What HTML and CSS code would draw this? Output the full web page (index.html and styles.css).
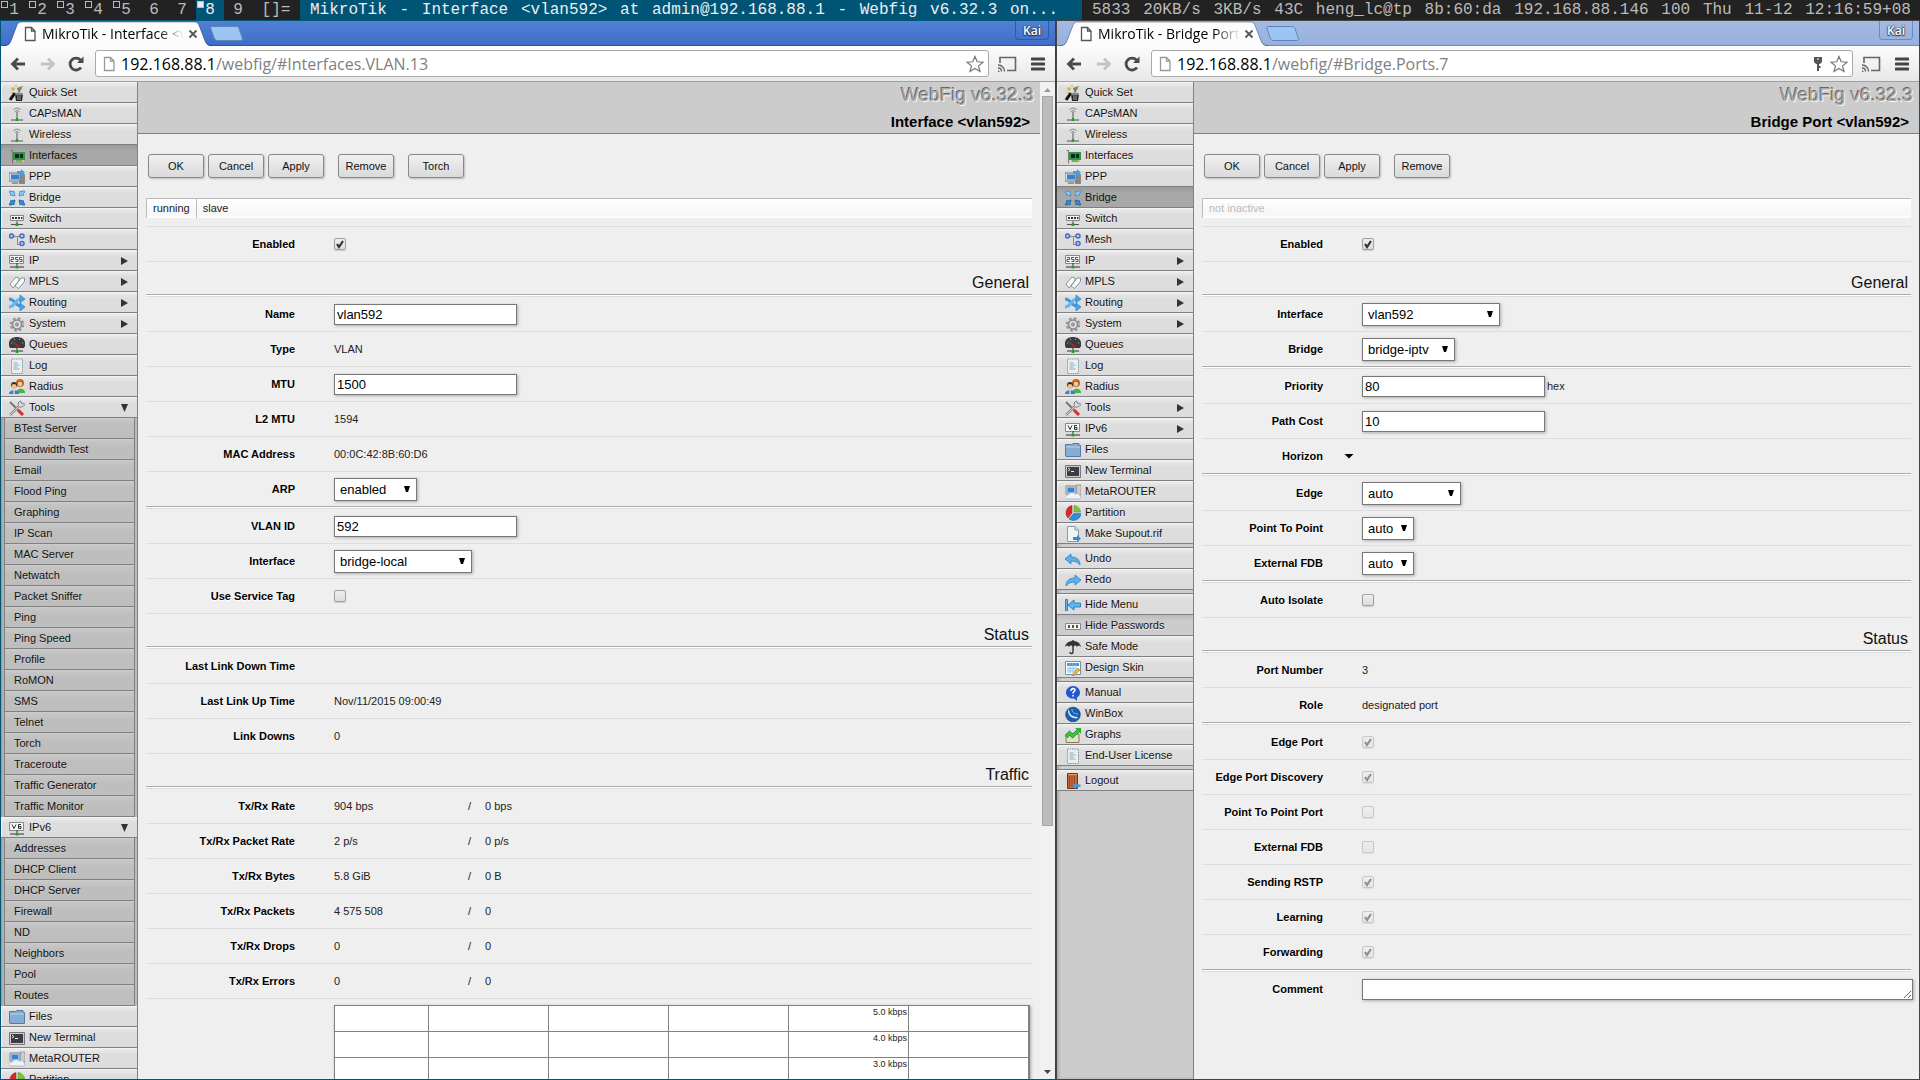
FILE: index.html
```html
<!DOCTYPE html>
<html lang="en">
<head>
<meta charset="utf-8">
<title>MikroTik - Interface &lt;vlan592&gt;</title>
<link rel="stylesheet" href="styles.css">
</head>
<body>
<svg class="sprite" aria-hidden="true">
  <symbol id="i-quick" viewBox="0 0 16 16"><path d="M1 15l5-7" stroke="#111" stroke-width="3"/><path d="M8 3l6-2-4 7z" fill="#666"/><path d="M6 9h8l-1 7H7z" fill="#222"/><ellipse cx="10" cy="9" rx="4" ry="1.5" fill="#888"/><path d="M9 11v4M11 11v4" stroke="#aaa"/><path d="M4 2v4M2 4h4M7 0v2M9 5l4-3M3 7v2" stroke="#d9a514"/></symbol>
  <symbol id="i-wifi" viewBox="0 0 16 16"><path d="M4.500 4C5.500 1.500 10.500 1.500 11.500 4M6 6c.5-2 3.500-2 4 0" fill="none" stroke="#888"/><path d="M8 5.500V13" stroke="#555"/><path d="M2 14h12" stroke="#555"/><path d="M6.500 15l.5-3h2l.5 3z" fill="#19a528"/></symbol>
  <symbol id="i-nic" viewBox="0 0 16 16"><path d="M1.500 2.500h2v13" fill="none" stroke="#777"/><path d="M4 4h12v8H4z" fill="#2f9838"/><path d="M6 12h9v2H6z" fill="#b9d84a"/><path d="M6 6h4v4H6zM11 6h3v4h-3z" fill="#123"/><path d="M8 12v2M10 12v2M12 12v2" stroke="#286"/></symbol>
  <symbol id="i-ppp" viewBox="0 0 16 16"><path d="M10 5h6v10h-6z" fill="#888"/><path d="M0 4h11v8H0z" fill="#ddd" stroke="#777"/><path d="M2 5.500h8v5H2z" fill="#2f86d8"/><path d="M3 13h6v2H3z" fill="#999"/><path d="M8 5V2h4V0l4 3.500L12 7V5z" fill="#39a4ee"/><path d="M12 12h3v1h-3z" fill="#2b2"/></symbol>
  <symbol id="i-bridge" viewBox="0 0 16 16"><path d="M0 1h3l1 1 1-1 1 5-5-1 1-1-2-2zM16 1h-3l-1 1-1-1-1 5 5-1-1-1 2-2z" fill="#7fcbf5" stroke="#3a83b8" stroke-width=".7"/><path d="M0 15h3l1-1 1 1 1-5-5 1 1 1-2 2zM16 15h-3l-1-1-1 1-1-5 5 1-1 1 2 2z" fill="#288fe0" stroke="#145b9c" stroke-width=".7"/></symbol>
  <symbol id="i-switch" viewBox="0 0 16 16"><path d="M1.500 4.500h13v5h-13z" fill="#f4f4f4" stroke="#888"/><path d="M3 7h2M6 7h2M9 7h2M12 7h1.500" stroke="#333" stroke-width="2"/><path d="M8 10v3M2 13.500h12" stroke="#555"/><path d="M6.500 15l.5-3h2l.5 3z" fill="#19a528"/></symbol>
  <symbol id="i-mesh" viewBox="0 0 16 16"><path d="M4 4.500h7M8.500 4.500v8H11" fill="none" stroke="#888"/><g fill="#b9cdf8" stroke="#4968c8" stroke-width="1.500"><circle cx="2.500" cy="4" r="2"/><circle cx="13" cy="4" r="2"/><circle cx="13" cy="11.500" r="2"/></g></symbol>
  <symbol id="i-ip" viewBox="0 0 16 16"><path d="M.5 2.500h14v8H.5z" fill="#f6f6f6" stroke="#888"/><path d="M2 4.500h2.500v2H2v2h2.500M9 4.500H6.500v2H9v2H6.500M13 4.500h-2.500v2H13v2h-2.500" fill="none" stroke="#555"/><path d="M8 10v3M1 14h14" stroke="#333"/><path d="M6.500 15.500L7 13h2l.5 2.500z" fill="#19a528"/></symbol>
  <symbol id="i-v6" viewBox="0 0 16 16"><path d="M.5 2.500h14v8H.5z" fill="#f6f6f6" stroke="#888"/><path d="M3 4.500l2 4 2-4M12 4.500H9.500v4H12v-2H9.500" fill="none" stroke="#333"/><path d="M8 10v3M1 14h14" stroke="#333"/><path d="M6.500 15.500L7 13h2l.5 2.500z" fill="#19a528"/></symbol>
  <symbol id="i-mpls" viewBox="0 0 16 16"><path d="M1 10l6-7 3 1v3l-6 7zM6 12l6-8h3.500v3.500l-6 7z" fill="#f3faf9" stroke="#7a8c8c" stroke-width=".9"/></symbol>
  <symbol id="i-route" viewBox="0 0 16 16"><path d="M0 4c6 0 6 7 12 7" fill="none" stroke="#3d99dc" stroke-width="3"/><path d="M0 12c6 0 6-8 12-8" fill="none" stroke="#64b5ee" stroke-width="3"/><path d="M11 0l5 4-5 4zM11 8l5 4-5 4z" fill="#4aa5e6" stroke="#2672ae" stroke-width=".6"/></symbol>
  <symbol id="i-gear" viewBox="0 0 16 16"><circle cx="8" cy="8.500" r="6" fill="none" stroke="#999" stroke-width="2.500" stroke-dasharray="2.700 2"/><circle cx="8" cy="8.500" r="4.500" fill="#ddd" stroke="#8a8a8a" stroke-width="1.500"/><circle cx="8" cy="8.500" r="1.500" fill="#aaa" stroke="#777" stroke-width=".8"/></symbol>
  <symbol id="i-queue" viewBox="0 0 16 16"><path d="M0 6C0 2 4 0 8 0s8 2 8 6v3l-1 2H1L0 9z" fill="#3c3c3c"/><path d="M3 4l7 6" stroke="#d33"/><path d="M2 6h1M5 2.500h1M10 2.500h1M13 6h1" stroke="#aaa"/><path d="M8 11v3M2 14h12" stroke="#333"/><path d="M6.500 16L7 13h2l.5 3z" fill="#19a528"/></symbol>
  <symbol id="i-log" viewBox="0 0 16 16"><path d="M2.500 1h11v14.500h-11z" fill="#e6f0f2" stroke="#86969c" stroke-dasharray="1.500 .8"/><path d="M4.500 5h4M4.500 7h6M4.500 9h4M4.500 11h6" stroke="#9ab"/></symbol>
  <symbol id="i-radius" viewBox="0 0 16 16"><circle cx="11" cy="4" r="4" fill="#c8651c"/><circle cx="11" cy="5" r="2.200" fill="#f5c89b"/><path d="M7 14c0-5 8-6 9-1v1z" fill="#4cae52"/><circle cx="5" cy="6" r="3" fill="#333"/><circle cx="5" cy="7.500" r="2.500" fill="#f0bd8c"/><path d="M0 15c0-5 10-5 10 0z" fill="#3d7ed0"/><path d="M5 11v4" stroke="#fff"/></symbol>
  <symbol id="i-tools" viewBox="0 0 16 16"><path d="M1 2l8 8" stroke="#777" stroke-width="2"/><path d="M9 10l5 5" stroke="#da2e2a" stroke-width="3"/><path d="M1 15L11 5" stroke="#888" stroke-width="2.500"/><path d="M1 15L11 5" stroke="#ddd"/><path d="M15 3a3 3 0 1 1-3-2v2l1 1z" fill="#ddd" stroke="#888"/></symbol>
  <symbol id="i-files" viewBox="0 0 16 16"><path d="M.5 13.500v-11h6l1.500-1h6v2h1.500v11H1z" fill="#86acd3" stroke="#557ba5"/><path d="M1 5h14" stroke="#bcd3ea"/></symbol>
  <symbol id="i-term" viewBox="0 0 16 16"><path d="M.5 2.500h15v12H.5z" fill="#ccc" stroke="#777"/><path d="M2 4h12v9H2z" fill="#3c3d45"/><path d="M3 5l2 1.500L3 8M6 8.500h3" fill="none" stroke="#eee"/></symbol>
  <symbol id="i-meta" viewBox="0 0 16 16"><path d="M11 1h5v10h-5z" fill="#ccc" stroke="#888" stroke-width=".7"/><path d="M1 2h10v8H1z" fill="#ddd" stroke="#888"/><path d="M2.500 3.500h7v5h-7z" fill="#2f86d8"/><path d="M0 13c0-2 2-2 3-2 2-3 6-3 7-1 3-1 5 0 5 2 1 0 1 2 0 3H2c-1 0-2-1-2-2z" fill="#edf3f8" stroke="#9ab" stroke-width=".7"/></symbol>
  <symbol id="i-part" viewBox="0 0 16 16"><path d="M7 8v-7.500A7.500 7.500 0 0 0 3 13z" fill="#db2a2d" stroke="#a11" stroke-width=".5"/><path d="M9 7V.5A7 7 0 0 1 15.500 7z" fill="#7cc53c" stroke="#4a8c1c" stroke-width=".5"/><path d="M8.500 8.500H16A7.500 7.500 0 0 1 4 14z" fill="#2e8ed9" stroke="#1561a5" stroke-width=".5"/></symbol>
  <symbol id="i-supout" viewBox="0 0 16 16"><path d="M2.500.5H10L13.500 4v11.500h-11z" fill="#eef6f8" stroke="#8a9ca2"/><path d="M10 .5V4h3.500" fill="#cde" stroke="#8a9ca2"/><path d="M8 11h4V9l4 3.500-4 3.500v-2H8z" fill="#2e8ed9"/></symbol>
  <symbol id="i-undo" viewBox="0 0 16 16"><path d="M0 8l6-5v3c6 0 9 3 9 8-2-3-5-4-9-4v3z" fill="#59b2ee" stroke="#2c7dba" stroke-width=".8"/></symbol>
  <symbol id="i-redo" viewBox="0 0 16 16"><path d="M16 8l-6-5v3C4 6 1 9 1 14c2-3 5-4 9-4v3z" fill="#59b2ee" stroke="#2c7dba" stroke-width=".8"/></symbol>
  <symbol id="i-hide" viewBox="0 0 16 16"><path d="M.5 2.500h2v11h-2zM3 8l6-5v3h6.500v4H9v3z" fill="#5cb6f0" stroke="#2877b4" stroke-width=".9"/></symbol>
  <symbol id="i-pass" viewBox="0 0 16 16"><path d="M.5 5.500h15v6H.5z" fill="#f4f4f4" stroke="#888"/><path d="M3 7h2v3H3zM7 7h2v3H7zM11 7h2v3h-2z" fill="#555"/></symbol>
  <symbol id="i-safe" viewBox="0 0 16 16"><path d="M0 8c1-8 15-8 16 0-2-2-3-2-4 0-1-2-3-2-4 0-1-2-3-2-4 0-1-2-2-2-4 0z" fill="#333"/><path d="M8 1v12c0 2-3 2-3 0" fill="none" stroke="#333" stroke-width="1.400"/></symbol>
  <symbol id="i-skin" viewBox="0 0 16 16"><path d="M.5 1.500h15v13H.5z" fill="#fff" stroke="#78909c"/><path d="M2 3h12v3H2z" fill="#2e9ee9"/><path d="M2 7h9v6H2z" fill="#cfe8fa"/><path d="M5 3v10M8 3v10M11 3v9M2 8.500h9M2 11h8" stroke="#8cc6ee" stroke-width=".7"/><path d="M8 14l5-6 2 2-5 5-3 1z" fill="#f3b53b" stroke="#b06e1e" stroke-width=".6"/></symbol>
  <symbol id="i-manual" viewBox="0 0 16 16"><path d="M8 1c4 0 7 3 7 6.500 0 2-1 4-3 5V16l-3-2.500C5 14 1 11.500 1 7.500 1 4 4 1 8 1z" fill="#2458cf"/><path d="M6 6c0-3 4-3 4-1 0 1.500-2 1.500-2 3.500M8 10v1.500" fill="none" stroke="#fff" stroke-width="1.600"/></symbol>
  <symbol id="i-winbox" viewBox="0 0 16 16"><circle cx="8" cy="8.500" r="7.300" fill="#1c5fb2" stroke="#12396e" stroke-width=".7"/><path d="M4 3c0 5 3 8 9 8l-1 1.500C6 12.500 3 9 3 5z" fill="#d5ecff"/><path d="M7 3c0 3 2 5 6 5" fill="none" stroke="#7fb8ec"/></symbol>
  <symbol id="i-graphs" viewBox="0 0 16 16"><path d="M1 7h13v8.500H1z" fill="#e5dfc8" stroke="#8a7a5c"/><path d="M1 10l3.500-4 3 3L13 4" fill="none" stroke="#168a22" stroke-width="3.500"/><path d="M1 10l3.500-4 3 3L13 4" fill="none" stroke="#3dcc45" stroke-width="2"/><path d="M10 1h6v6z" fill="#2bb135"/></symbol>
  <symbol id="i-logout" viewBox="0 0 16 16"><path d="M2.500.5h10v15h-10z" fill="#c06a3c" stroke="#74351a"/><path d="M4.500 3v11M7 3v11M9.500 3v11" stroke="#964a24"/><path d="M3 1.500h9" stroke="#e99872"/><path d="M15.500 11.500H11v-2L7 13l4 3v-2h4.500z" fill="#3a9be6"/></symbol>
  <symbol id="c-page" viewBox="0 0 12 16"><path d="M1.500 1.500h6l3.500 3.500v9.500H1.500zM7.500 1.500V5H11" fill="#fff" stroke="currentColor" stroke-width="1.300"/></symbol>
  <symbol id="c-back" viewBox="0 0 16 14"><path d="M15 7H3M8 1.500L2.500 7 8 12.500" fill="none" stroke="currentColor" stroke-width="2.800"/></symbol>
  <symbol id="c-fwd" viewBox="0 0 16 14"><path d="M1 7h12M8 1.500L13.500 7 8 12.500" fill="none" stroke="currentColor" stroke-width="2.800"/></symbol>
  <symbol id="c-reload" viewBox="0 0 16 16"><path d="M13 11.500A6 6 0 1 1 12.500 4" fill="none" stroke="currentColor" stroke-width="2.800"/><path d="M15.500.5V7H9z" fill="currentColor"/></symbol>
  <symbol id="c-star" viewBox="0 0 18 18"><path d="M9 1.500l2.200 5.300 5.800.4-4.500 3.700L14 16.500 9 13.400l-5 3.100 1.500-5.600L1 7.200l5.800-.4z" fill="#fff" stroke="#777" stroke-width="1.200"/></symbol>
  <symbol id="c-cast" viewBox="0 0 20 16"><path d="M3 7V1.500h15.500v13H10" fill="none" stroke="#666" stroke-width="1.600"/><path d="M1 9c4 0 6.500 3 6.500 6.500M1 12c2 0 3.500 1.500 3.500 3.500" fill="none" stroke="#666" stroke-width="1.300"/><path d="M1 14l2 2H1z" fill="#666"/></symbol>
  <symbol id="c-menu" viewBox="0 0 14 14"><path d="M1 2h12M1 7h12M1 12h12" stroke="#444" stroke-width="3" stroke-linecap="round"/></symbol>
  <symbol id="c-key" viewBox="0 0 10 16"><path d="M1 1h8v5L7 8H3L1 6z" fill="#555"/><path d="M5 7v8M6 11h1.500" stroke="#555" stroke-width="2"/><path d="M4 3h2" stroke="#fff"/></symbol>
  <symbol id="c-close" viewBox="0 0 10 10"><path d="M1.500 1.500l7 7M8.500 1.500l-7 7" stroke="#555" stroke-width="1.800"/></symbol>
  <symbol id="c-tab" viewBox="0 0 212 25" preserveAspectRatio="none"><path d="M0 25c5 0 6-2 8-7l5-13c1-3 2-4 5-4h176c3 0 4 1 5 4l5 13c2 5 3 7 8 7z" fill="#fdfdfd"/><path d="M0 24.500c5 0 6-2 8-7l5-12.500c1-3 2-4 5-4h176c3 0 4 1 5 4l5 12.500c2 5 3 7 8 7" fill="none" stroke="#00235a" stroke-opacity=".4"/></symbol>
  <symbol id="c-new" viewBox="0 0 34 17"><path d="M4 1.500h22c2 0 3 0 4 2l3 9c1 2 0 3-2 3H9c-2 0-3-1-4-3L2 4c-1-2 0-2.500 2-2.500z" fill="#9cc5f3" stroke="#5e86bd"/></symbol>
</svg>

<header class="wm">
  <div class="ws used">1</div><div class="ws used">2</div><div class="ws used">3</div><div class="ws used">4</div><div class="ws used">5</div><div class="ws">6</div><div class="ws">7</div><div class="ws used current">8</div><div class="ws">9</div>
  <div class="layout">[]=</div>
  <div class="wtitle">MikroTik - Interface &lt;vlan592&gt; at admin@192.168.88.1 - Webfig v6.32.3 on...</div>
  <div class="stat"><span>5833</span><span>20KB/s</span><span>3KB/s</span><span>43C</span><span>heng_lc@tp</span><span>8b:60:da</span><span>192.168.88.146</span><span>100</span><span>Thu</span><span>11-12</span><span>12:16:59+08</span></div>
</header>

<main class="desk">
<section class="win focus">
  <div class="strip">
    <div class="tab"><svg class="tabshape"><use href="#c-tab"/></svg><svg class="pg"><use href="#c-page"/></svg><span class="tabname">MikroTik - Interface &lt;vlan592&gt;</span><svg class="x"><use href="#c-close"/></svg></div>
    <svg class="newtab"><use href="#c-new"/></svg>
    <button class="user" type="button">Kai</button>
  </div>
  <div class="tools">
    <svg class="nv"><use href="#c-back"/></svg><svg class="nv dim"><use href="#c-fwd"/></svg><svg class="rl"><use href="#c-reload"/></svg>
    <div class="omni"><svg class="pg soft"><use href="#c-page"/></svg><span class="url"><b>192.168.88.1</b>/webfig/#Interfaces.VLAN.13</span><svg class="star"><use href="#c-star"/></svg></div>
    <svg class="cast"><use href="#c-cast"/></svg><svg class="menu"><use href="#c-menu"/></svg>
  </div>
  <div class="page">
    <nav class="side">
      <a href="#"><svg><use href="#i-quick"/></svg>Quick Set</a>
      <a href="#"><svg><use href="#i-wifi"/></svg>CAPsMAN</a>
      <a href="#"><svg><use href="#i-wifi"/></svg>Wireless</a>
      <a href="#" class="on"><svg><use href="#i-nic"/></svg>Interfaces</a>
      <a href="#"><svg><use href="#i-ppp"/></svg>PPP</a>
      <a href="#"><svg><use href="#i-bridge"/></svg>Bridge</a>
      <a href="#"><svg><use href="#i-switch"/></svg>Switch</a>
      <a href="#"><svg><use href="#i-mesh"/></svg>Mesh</a>
      <a href="#" class="more"><svg><use href="#i-ip"/></svg>IP</a>
      <a href="#" class="more"><svg><use href="#i-mpls"/></svg>MPLS</a>
      <a href="#" class="more"><svg><use href="#i-route"/></svg>Routing</a>
      <a href="#" class="more"><svg><use href="#i-gear"/></svg>System</a>
      <a href="#"><svg><use href="#i-queue"/></svg>Queues</a>
      <a href="#"><svg><use href="#i-log"/></svg>Log</a>
      <a href="#"><svg><use href="#i-radius"/></svg>Radius</a>
      <a href="#" class="more open"><svg><use href="#i-tools"/></svg>Tools</a>
      <div class="sub">
        <a href="#">BTest Server</a><a href="#">Bandwidth Test</a><a href="#">Email</a><a href="#">Flood Ping</a><a href="#">Graphing</a><a href="#">IP Scan</a><a href="#">MAC Server</a><a href="#">Netwatch</a><a href="#">Packet Sniffer</a><a href="#">Ping</a><a href="#">Ping Speed</a><a href="#">Profile</a><a href="#">RoMON</a><a href="#">SMS</a><a href="#">Telnet</a><a href="#">Torch</a><a href="#">Traceroute</a><a href="#">Traffic Generator</a><a href="#">Traffic Monitor</a>
      </div>
      <a href="#" class="more open"><svg><use href="#i-v6"/></svg>IPv6</a>
      <div class="sub">
        <a href="#">Addresses</a><a href="#">DHCP Client</a><a href="#">DHCP Server</a><a href="#">Firewall</a><a href="#">ND</a><a href="#">Neighbors</a><a href="#">Pool</a><a href="#">Routes</a>
      </div>
      <a href="#"><svg><use href="#i-files"/></svg>Files</a>
      <a href="#"><svg><use href="#i-term"/></svg>New Terminal</a>
      <a href="#"><svg><use href="#i-meta"/></svg>MetaROUTER</a>
      <a href="#"><svg><use href="#i-part"/></svg>Partition</a>
    </nav>
    <div class="body">
      <div class="head"><div class="logo">WebFig v6.32.3</div><h1>Interface &lt;vlan592&gt;</h1></div>
      <form class="form">
        <div class="btns"><button type="button">OK</button><button type="button">Cancel</button><button type="button">Apply</button><button type="button" class="apart">Remove</button><button type="button" class="apart">Torch</button></div>
        <div class="flags"><span>running</span><span>slave</span></div>
        <div class="row"><label for="l-en">Enabled</label><input type="checkbox" id="l-en" checked></div>
        <h2>General</h2>
        <div class="row"><label for="l-name">Name</label><input type="text" id="l-name" value="vlan592"></div>
        <div class="row"><b>Type</b><span>VLAN</span></div>
        <div class="row"><label for="l-mtu">MTU</label><input type="text" id="l-mtu" value="1500"></div>
        <div class="row"><b>L2 MTU</b><span>1594</span></div>
        <div class="row"><b>MAC Address</b><span>00:0C:42:8B:60:D6</span></div>
        <div class="row end"><label for="l-arp">ARP</label><select id="l-arp" class="w83"><option>enabled</option></select></div>
        <div class="row"><label for="l-vid">VLAN ID</label><input type="text" id="l-vid" value="592"></div>
        <div class="row"><label for="l-if">Interface</label><select id="l-if" class="w138"><option>bridge-local</option></select></div>
        <div class="row"><label for="l-tag">Use Service Tag</label><input type="checkbox" id="l-tag"></div>
        <h2>Status</h2>
        <div class="row"><b>Last Link Down Time</b><span></span></div>
        <div class="row"><b>Last Link Up Time</b><span>Nov/11/2015 09:00:49</span></div>
        <div class="row"><b>Link Downs</b><span>0</span></div>
        <h2>Traffic</h2>
        <div class="row"><b>Tx/Rx Rate</b><span class="tx">904 bps</span><span class="rx">/</span><span>0 bps</span></div>
        <div class="row"><b>Tx/Rx Packet Rate</b><span class="tx">2 p/s</span><span class="rx">/</span><span>0 p/s</span></div>
        <div class="row"><b>Tx/Rx Bytes</b><span class="tx">5.8 GiB</span><span class="rx">/</span><span>0 B</span></div>
        <div class="row"><b>Tx/Rx Packets</b><span class="tx">4 575 508</span><span class="rx">/</span><span>0</span></div>
        <div class="row"><b>Tx/Rx Drops</b><span class="tx">0</span><span class="rx">/</span><span>0</span></div>
        <div class="row"><b>Tx/Rx Errors</b><span class="tx">0</span><span class="rx">/</span><span>0</span></div>
        <div class="graphrow"><div class="graph">
          <i></i><i></i><i></i><i></i><i>5.0 kbps</i><i></i>
          <i></i><i></i><i></i><i></i><i>4.0 kbps</i><i></i>
          <i></i><i></i><i></i><i></i><i>3.0 kbps</i><i></i>
        </div></div>
      </form>
    </div>
    <div class="scroll" aria-hidden="true"><span class="up"></span><span class="thumb"></span><span class="down"></span></div>
  </div>
</section>

<section class="win idle">
  <div class="strip">
    <div class="tab"><svg class="tabshape"><use href="#c-tab"/></svg><svg class="pg"><use href="#c-page"/></svg><span class="tabname">MikroTik - Bridge Port &lt;vlan592&gt;</span><svg class="x"><use href="#c-close"/></svg></div>
    <svg class="newtab"><use href="#c-new"/></svg>
    <button class="user" type="button">Kai</button>
  </div>
  <div class="tools">
    <svg class="nv"><use href="#c-back"/></svg><svg class="nv dim"><use href="#c-fwd"/></svg><svg class="rl"><use href="#c-reload"/></svg>
    <div class="omni"><svg class="pg soft"><use href="#c-page"/></svg><span class="url"><b>192.168.88.1</b>/webfig/#Bridge.Ports.7</span><svg class="key"><use href="#c-key"/></svg><svg class="star"><use href="#c-star"/></svg></div>
    <svg class="cast"><use href="#c-cast"/></svg><svg class="menu"><use href="#c-menu"/></svg>
  </div>
  <div class="page">
    <nav class="side">
      <a href="#"><svg><use href="#i-quick"/></svg>Quick Set</a>
      <a href="#"><svg><use href="#i-wifi"/></svg>CAPsMAN</a>
      <a href="#"><svg><use href="#i-wifi"/></svg>Wireless</a>
      <a href="#"><svg><use href="#i-nic"/></svg>Interfaces</a>
      <a href="#"><svg><use href="#i-ppp"/></svg>PPP</a>
      <a href="#" class="on"><svg><use href="#i-bridge"/></svg>Bridge</a>
      <a href="#"><svg><use href="#i-switch"/></svg>Switch</a>
      <a href="#"><svg><use href="#i-mesh"/></svg>Mesh</a>
      <a href="#" class="more"><svg><use href="#i-ip"/></svg>IP</a>
      <a href="#" class="more"><svg><use href="#i-mpls"/></svg>MPLS</a>
      <a href="#" class="more"><svg><use href="#i-route"/></svg>Routing</a>
      <a href="#" class="more"><svg><use href="#i-gear"/></svg>System</a>
      <a href="#"><svg><use href="#i-queue"/></svg>Queues</a>
      <a href="#"><svg><use href="#i-log"/></svg>Log</a>
      <a href="#"><svg><use href="#i-radius"/></svg>Radius</a>
      <a href="#" class="more"><svg><use href="#i-tools"/></svg>Tools</a>
      <a href="#" class="more"><svg><use href="#i-v6"/></svg>IPv6</a>
      <a href="#"><svg><use href="#i-files"/></svg>Files</a>
      <a href="#"><svg><use href="#i-term"/></svg>New Terminal</a>
      <a href="#"><svg><use href="#i-meta"/></svg>MetaROUTER</a>
      <a href="#"><svg><use href="#i-part"/></svg>Partition</a>
      <a href="#"><svg><use href="#i-supout"/></svg>Make Supout.rif</a>
      <div class="group">
        <a href="#"><svg><use href="#i-undo"/></svg>Undo</a>
        <a href="#"><svg><use href="#i-redo"/></svg>Redo</a>
      </div>
      <div class="group">
        <a href="#"><svg><use href="#i-hide"/></svg>Hide Menu</a>
        <a href="#" class="half"><svg><use href="#i-pass"/></svg>Hide Passwords</a>
        <a href="#"><svg><use href="#i-safe"/></svg>Safe Mode</a>
        <a href="#"><svg><use href="#i-skin"/></svg>Design Skin</a>
      </div>
      <div class="group">
        <a href="#"><svg><use href="#i-manual"/></svg>Manual</a>
        <a href="#"><svg><use href="#i-winbox"/></svg>WinBox</a>
        <a href="#"><svg><use href="#i-graphs"/></svg>Graphs</a>
        <a href="#"><svg><use href="#i-log"/></svg>End-User License</a>
      </div>
      <div class="group">
        <a href="#"><svg><use href="#i-logout"/></svg>Logout</a>
      </div>
    </nav>
    <div class="body">
      <div class="head"><div class="logo">WebFig v6.32.3</div><h1>Bridge Port &lt;vlan592&gt;</h1></div>
      <form class="form narrow">
        <div class="btns"><button type="button">OK</button><button type="button">Cancel</button><button type="button">Apply</button><button type="button" class="apart">Remove</button></div>
        <div class="flags off"><span>not inactive</span></div>
        <div class="row"><label for="r-en">Enabled</label><input type="checkbox" id="r-en" checked></div>
        <h2>General</h2>
        <div class="row"><label for="r-if">Interface</label><select id="r-if" class="w138"><option>vlan592</option></select></div>
        <div class="row end"><label for="r-br">Bridge</label><select id="r-br" class="w93"><option>bridge-iptv</option></select></div>
        <div class="row"><label for="r-pr">Priority</label><input type="text" id="r-pr" value="80"><span class="unit">hex</span></div>
        <div class="row"><label for="r-pc">Path Cost</label><input type="text" id="r-pc" value="10"></div>
        <div class="row end"><b>Horizon</b><button class="expand" type="button" aria-label="Horizon"></button></div>
        <div class="row"><label for="r-ed">Edge</label><select id="r-ed" class="w99"><option>auto</option></select></div>
        <div class="row"><label for="r-pp">Point To Point</label><select id="r-pp" class="w52"><option>auto</option></select></div>
        <div class="row end"><label for="r-ef">External FDB</label><select id="r-ef" class="w52"><option>auto</option></select></div>
        <div class="row"><label for="r-ai">Auto Isolate</label><input type="checkbox" id="r-ai"></div>
        <h2>Status</h2>
        <div class="row"><b>Port Number</b><span>3</span></div>
        <div class="row end"><b>Role</b><span>designated port</span></div>
        <div class="row"><label for="r-s1">Edge Port</label><input type="checkbox" id="r-s1" checked disabled></div>
        <div class="row"><label for="r-s2">Edge Port Discovery</label><input type="checkbox" id="r-s2" checked disabled></div>
        <div class="row"><label for="r-s3">Point To Point Port</label><input type="checkbox" id="r-s3" disabled></div>
        <div class="row"><label for="r-s4">External FDB</label><input type="checkbox" id="r-s4" disabled></div>
        <div class="row"><label for="r-s5">Sending RSTP</label><input type="checkbox" id="r-s5" checked disabled></div>
        <div class="row"><label for="r-s6">Learning</label><input type="checkbox" id="r-s6" checked disabled></div>
        <div class="row end"><label for="r-s7">Forwarding</label><input type="checkbox" id="r-s7" checked disabled></div>
        <div class="row"><label for="r-co">Comment</label><textarea id="r-co" rows="1"></textarea></div>
      </form>
    </div>
  </div>
</section>
</main>
</body>
</html>
```
FILE: styles.css
```css
* { box-sizing: border-box; }
body {
  margin: 0;
  height: 100vh;
  overflow: hidden;
  display: flex;
  flex-direction: column;
  font: 11px/13px "Liberation Sans", Arial, sans-serif;
  color: #222;
  background: #222;
}
svg { display: block; flex: none; }
.sprite { position: absolute; width: 0; height: 0; }

/* window manager bar */
.wm {
  display: flex;
  height: 20px;
  flex: none;
  font: 16px/20px "Liberation Mono", monospace;
  color: #bbb;
  background: #222;
  white-space: nowrap;
}
.ws { position: relative; width: 28px; text-align: center; }
.ws.used::before {
  content: "";
  position: absolute;
  left: 1px;
  top: 1px;
  width: 5px;
  height: 5px;
  border: 1px solid #bbb;
}
.ws.current { background: #057; color: #eee; }
.ws.current::before { background: #eee; }
.layout { width: 48px; text-align: center; }
.wtitle {
  flex: 1;
  padding: 0 24px 0 10px;
  background: #057;
  color: #eee;
  text-align-last: justify;
  overflow: hidden;
}
.stat {
  width: 838px;
  padding: 0 9px 0 10px;
  display: flex;
  justify-content: space-between;
}

/* browser windows */
.desk { flex: 1; min-height: 0; display: flex; }
.win {
  display: flex;
  flex-direction: column;
  min-width: 0;
  border: 1px solid #444;
  background: #efefef;
}
.focus { flex: 0 0 55%; border-color: #057; }
.idle { flex: 1; }
.strip {
  height: 25px;
  flex: none;
  display: flex;
  padding-left: 3px;
  background: linear-gradient(#5081d6, #3f6dc6);
  box-shadow: inset 0 -1px #2b559f;
}
.idle .strip {
  background: linear-gradient(#a3bae3, #97afdb);
  box-shadow: inset 0 -1px #6f8bbd;
}
.tab {
  position: relative;
  width: 208px;
  display: flex;
  align-items: center;
  padding: 0 14px 0 20px;
}
.tabshape { position: absolute; left: 0; top: 0; width: 100%; height: 100%; }
.pg { position: relative; width: 12px; height: 16px; color: #555; }
.pg.soft { color: #999; }
.tabname {
  position: relative;
  flex: 1;
  margin: 0 4px 0 6px;
  overflow: hidden;
  white-space: nowrap;
  font: 14px/20px "Open Sans", "Noto Sans", sans-serif;
  color: #000;
  -webkit-mask-image: linear-gradient(90deg, #000 82%, transparent);
  mask-image: linear-gradient(90deg, #000 82%, transparent);
}
.x { position: relative; width: 10px; height: 10px; }
.newtab { width: 34px; height: 17px; margin: 4px auto 0 -3px; }
.user {
  width: 34px;
  height: 19px;
  margin: 0 6px 0 0;
  padding: 2px 0 0;
  border: 1px solid #2f5aa6;
  border-top: 0;
  border-radius: 0 0 4px 4px;
  background: transparent;
  color: #fff;
  font: 600 12px/14px "Open Sans", "Noto Sans", sans-serif;
  text-shadow: 0 0 1px #234, 0 0 2px #234, 0 1px 1px #234;
}
.idle .user { border-color: #6f8bbd; }
.tools {
  height: 36px;
  flex: none;
  display: flex;
  align-items: center;
  padding: 0 10px 0 9px;
  border-bottom: 1px solid #a0a0a0;
  background: linear-gradient(#fcfcfc, #e8e8e8);
}
.nv { width: 16px; height: 14px; margin-right: 14px; color: #4a4a4a; }
.nv.dim { color: #c4c4c4; margin-right: 12px; }
.rl { width: 16px; height: 16px; margin-right: 11px; color: #4a4a4a; }
.omni {
  flex: 1;
  height: 27px;
  display: flex;
  align-items: center;
  padding: 0 4px 0 7px;
  border: 1px solid #aaa;
  border-radius: 3px;
  background: #fff;
}
.url {
  flex: 1;
  padding-left: 6px;
  font: 16px/24px "Open Sans", "Noto Sans", sans-serif;
  color: #808080;
  white-space: nowrap;
}
.url b { font-weight: 400; color: #000; }
.star { width: 18px; height: 18px; }
.key { width: 10px; height: 16px; margin-right: 7px; }
.cast { width: 20px; height: 16px; margin: 0 14px 0 8px; }
.menu { width: 14px; height: 14px; }

/* page */
.page { flex: 1; min-height: 0; display: flex; overflow: hidden; }
.side {
  width: 137px;
  flex: none;
  border-right: 1px solid #808080;
  background: #ccc;
  box-shadow: inset 2px 0 3px #aaa;
}
.side a {
  display: flex;
  align-items: center;
  height: 21px;
  padding-left: 8px;
  border-bottom: 1px solid #808080;
  background: linear-gradient(#eee, #ddd 30%, #dcdcdc);
  box-shadow: inset 1px 1px #f2f2f2;
  color: #111;
  text-decoration: none;
  text-shadow: 0 1px #eee;
}
.side svg { width: 16px; height: 16px; margin: 2px 4px 0 0; }
.side a.on { background: linear-gradient(#989898, #a8a8a8 30%); box-shadow: none; text-shadow: none; }
.side a.half { background: linear-gradient(#bbb, #ccc 30%); box-shadow: none; }
.more::after {
  content: "";
  width: 7px;
  height: 8px;
  margin: 2px 9px 0 auto;
  background: #333;
  clip-path: polygon(0 0, 100% 50%, 0 100%);
}
.more.open::after { clip-path: polygon(0 0, 100% 0, 50% 100%); }
.sub { padding: 0 2px 0 3px; background: linear-gradient(90deg, #999, #bbb 3px); }
.side .sub a {
  padding-left: 9px;
  border: 1px solid #808080;
  border-top: 0;
  background: linear-gradient(#c8c8c8, #bebebe 40%);
  box-shadow: inset 0 1px #ccc;
  text-shadow: 0 1px #ccc;
}
.group { margin-top: 3px; border-top: 1px solid #808080; }
.body { flex: 1; min-width: 0; overflow: hidden; }
.head {
  height: 52px;
  padding: 3px 10px 0 0;
  background: #ccc;
  border-bottom: 1px solid #808080;
  text-align: right;
}
.logo {
  margin-right: -4px;
  font-size: 19px;
  line-height: 20px;
  color: #aaa;
  text-shadow: -1px -1px #666, 1px 1px #f4f4f4;
}
h1 { margin: 8px 0 0; font-size: 15px; line-height: 18px; color: #000; }
.form { padding: 20px 8px 0; }
.btns { display: flex; gap: 4px; padding-left: 2px; height: 24px; }
.btns button {
  width: 56px;
  padding: 0;
  border: 1px solid #888;
  border-radius: 3px;
  background: linear-gradient(#f0f0f0, #dadada);
  box-shadow: 1px 1px 2px #bbb;
  font: inherit;
  color: #111;
}
.btns .apart { margin-left: 10px; }
.flags {
  display: flex;
  height: 20px;
  margin: 20px 0 8px;
  border-top: 1px solid #bbb;
  border-left: 1px solid #bbb;
  background: linear-gradient(#fff, #f6f6f6 80%, #fff);
}
.flags span { padding: 3px 6px 0; }
.flags span + span { border-left: 1px solid #bbb; }
.flags.off { color: #bbb; }
.row {
  display: flex;
  align-items: center;
  height: 35px;
  border-top: 1px solid #ddd;
  white-space: nowrap;
}
.row label, .row b {
  width: 149px;
  margin-right: 39px;
  text-align: right;
  font-weight: 700;
  color: #000;
  text-shadow: 0 1px #fff;
}
.narrow .row label, .narrow .row b { width: 121px; }
h2 {
  margin: 0;
  height: 33px;
  padding: 11px 3px 0 0;
  border-top: 1px solid #ddd;
  text-align: right;
  font-size: 16px;
  line-height: 20px;
  font-weight: 400;
  color: #111;
}
.row.end, h2 { margin-bottom: 2px; box-shadow: 0 1px #aaa, 0 2px #fff; }
.tx { width: 134px; }
.rx { width: 17px; }
input[type=text], select, textarea {
  margin: 0;
  border: 1px solid #777;
  border-radius: 0;
  background-color: #fff;
  box-shadow: 1px 1px 3px #aaa;
  font: 13px/15px "Liberation Sans", Arial, sans-serif;
  color: #000;
}
input[type=text] { width: 183px; height: 21px; padding: 0 2px; }
select {
  appearance: none;
  height: 23px;
  padding: 0 0 0 5px;
  background-image: url("data:image/svg+xml,%3Csvg xmlns='http://www.w3.org/2000/svg' width='6' height='6'%3E%3Cpath d='M0 0h6L4 6H2z'/%3E%3C/svg%3E");
  background-repeat: no-repeat;
  background-position: right 6px top 7px;
}
.w138 { width: 138px; }
.w99 { width: 99px; }
.w93 { width: 93px; }
.w83 { width: 83px; }
.w52 { width: 52px; }
textarea { flex: 1; height: 21px; margin-right: -2px; padding: 1px 2px; overflow: hidden; }
input[type=checkbox] {
  appearance: none;
  width: 12px;
  height: 12px;
  margin: 0;
  border: 1px solid #a0a0a0;
  border-radius: 2px;
  background: linear-gradient(#eee, #ddd);
  box-shadow: 0 1px 1px #ccc;
}
input[type=checkbox]:checked {
  background: url("data:image/svg+xml,%3Csvg xmlns='http://www.w3.org/2000/svg' width='10' height='10'%3E%3Cpath d='M2 5l2 3 4-6' fill='none' stroke='%23333' stroke-width='2.200'/%3E%3C/svg%3E"), linear-gradient(#eee, #ddd);
}
input[type=checkbox]:disabled { opacity: .5; }
.unit { margin-left: 2px; }
.expand {
  width: 10px;
  height: 5px;
  margin-left: -18px;
  padding: 0;
  border: 0;
  background: #000;
  clip-path: polygon(0 0, 100% 0, 50% 100%);
}
.graphrow { border-top: 1px solid #ddd; padding: 6px 2px 0 188px; }
.graph {
  display: grid;
  grid-template-columns: 1fr repeat(4, 120px) 119px;
  border: 1px solid #808080;
  border-right-width: 2px;
  border-bottom: 0;
  background: #fff;
  box-shadow: 1px 1px 3px #aaa;
}
.graph i {
  height: 26px;
  padding-right: 1px;
  border-right: 1px solid #808080;
  border-bottom: 1px solid #808080;
  font-style: normal;
  font-size: 9px;
  line-height: 12px;
  text-align: right;
}
.graph i:nth-child(6n) { border-right: 0; }

/* page scrollbar */
.scroll {
  width: 15px;
  flex: none;
  display: flex;
  flex-direction: column;
  padding: 6px 2px 5px;
  background: #f1f1f1;
}
.up, .down { width: 7px; height: 4px; margin: 0 2px; background: #999; flex: none; }
.up { clip-path: polygon(50% 0, 100% 100%, 0 100%); }
.down { clip-path: polygon(0 0, 100% 0, 50% 100%); background: #444; margin-top: auto; }
.thumb { flex: 0 0 74%; width: 11px; margin-top: 4px; border: 1px solid #a6a6a6; background: #bcbcbc; }
```
